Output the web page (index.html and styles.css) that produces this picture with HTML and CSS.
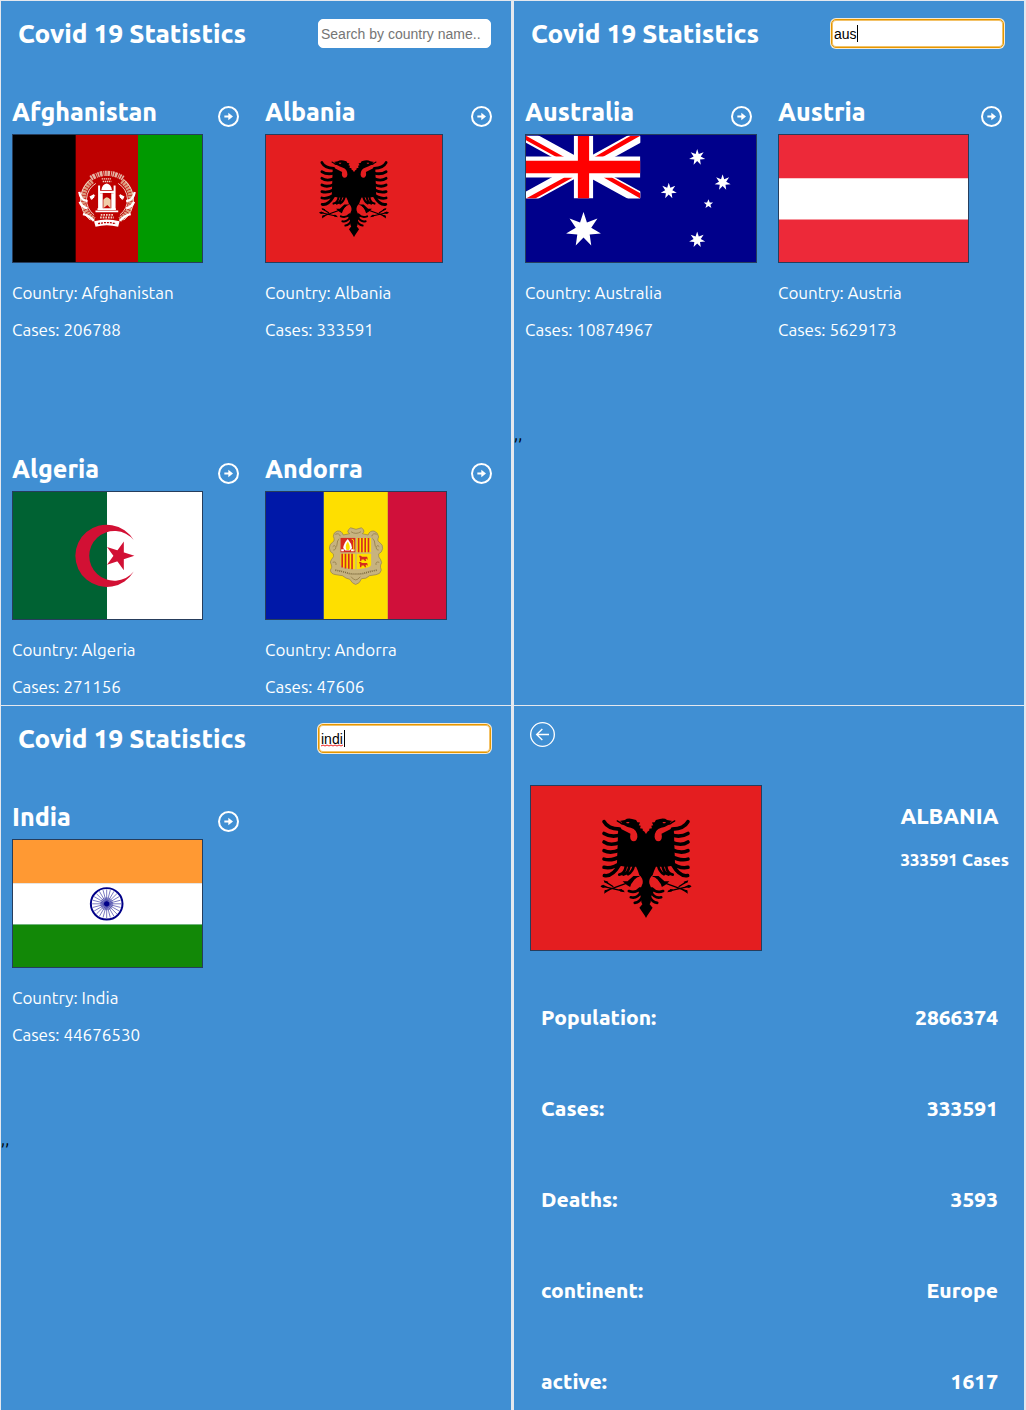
FILE: index.html
```html
<!DOCTYPE html>
<html lang="en">
<head>
<meta charset="utf-8">
<meta name="viewport" content="width=device-width, initial-scale=1">
<title>Covid 19 Statistics</title>
<link rel="stylesheet" href="styles.css">
</head>
<body>
<svg class="sprite" aria-hidden="true">
  <symbol id="go" viewBox="0 0 63 63">
    <circle cx="31.500" cy="31.500" r="28.500" fill="none" stroke="#fff" stroke-width="6"/>
    <path d="M19 31.500H38" stroke="#fff" stroke-width="6"/>
    <path d="M31 20L45 31.500L31 43Z" fill="#fff"/>
  </symbol>
  <symbol id="star7" viewBox="-1 -1 2 2">
    <path fill="#fff" d="M0-1L.193-.4 .782-.623 .433-.099 .975 .223 .347 .277 .434 .901 0 .444-.434 .901-.347 .277-.975 .223-.433-.099-.782-.623-.193-.4Z"/>
  </symbol>
  <symbol id="albania" viewBox="60 255 696 498" preserveAspectRatio="none">
    <path fill="#e41e20" d="M60 255h696v498H60z"/>
    <g id="half-eagle">
      <path d="M409 402L403 393 398 390 398 385 390 383 392 376 386 374 390 366 382 365 378 358 366 355Q352 352 344 358L328 361 336 365 330 370 342 374Q352 380 362 382 382 388 382 410 380 423 371 423 360 421 360 408L361 400 324 381 320 496 346 500 378 500Q384 512 388 526 400 536 398 550 394 566 384 574L392 590 394 608 397 614 388 625 408 654H409Z"/>
      <g fill="none" stroke="#000" stroke-width="11" stroke-linecap="round">
        <path d="M281 363Q292 384 328 386M281 399Q302 412 330 404M281 425Q300 438 330 426M281 451Q302 462 330 448M281 477Q304 484 332 468M281 502Q306 508 334 486M282 527Q306 532 328 494"/>
        <path stroke-width="8" d="M327 524Q344 522 347 498M340 524Q354 520 358 498M354 523Q368 514 371 498"/>
        <path stroke-width="8" d="M356 574Q376 582 390 566M362 593Q382 598 394 576M374 610Q390 608 398 588"/>
        <path stroke-width="4" d="M350 550L284 574M274 559L340 574M286 546L308 560M321 361L336 370"/>
      </g>
      <path d="M337 544L352 544 370 528 392 528Q366 538 360 562L350 556ZM270 560L278 555 290 560 278 565ZM280 541L294 546 292 551 282 548ZM281 582L284 571 300 570ZM326 569L334 568 344 578 330 575Z"/>
      <path fill="#e41e20" d="M348 364h10l-2 4h-6z"/>
      <path fill="#e41e20" d="M392 528Q364 536 366 563 376 560 386 550 392 540 392 528Z"/>
    </g>
    <use href="#half-eagle" transform="translate(816 0) scale(-1 1)"/>
  </symbol>
</svg>

<main class="board">
  <section class="panel">
    <header class="top">
      <h1 class="title">Covid 19 Statistics</h1>
      <div class="search"><input class="search-box" type="text" aria-label="Search by country name" placeholder="Search by country name.."></div>
    </header>
    <div class="cards">
      <article class="card">
        <div class="card-head"><h2 class="name">Afghanistan</h2><a class="go" href="#afghanistan" aria-label="Afghanistan details"><svg><use href="#go"/></svg></a></div>
        <svg class="flag flag-3x2" viewBox="36 400 573 388" preserveAspectRatio="none" role="img" aria-label="Flag of Afghanistan">
          <path d="M36 400h191v388H36z"/><path fill="#be0000" d="M226 400h189v388H226z"/><path fill="#090" d="M415 400h194v388H415z"/>
          <g fill="none" stroke="#f1d5c5">
            <path stroke-width="16" stroke-dasharray="7 2" stroke="#dd9c80" d="M276 540A72 72 0 0 0 282 658M366 540A72 72 0 0 1 360 658"/>
            <path stroke-width="3" d="M268 538A80 80 0 0 0 270 660M374 538A80 80 0 0 1 372 660M287 548A58 58 0 0 0 282 644M355 548A58 58 0 0 1 360 644"/>
            <path stroke-width="16" stroke-dasharray="5 2 8 3 3 2" stroke="#e5b5a5" d="M272 532Q320 502 370 532"/>
            <path stroke-width="4" stroke-dasharray="4 2" d="M305 534h30M308 542h26"/>
            <path stroke="#fff" stroke-width="7" d="M237 574Q240 600 262 602M405 574Q401 600 379 602M238 604Q244 620 262 624M403 604Q397 620 379 624M248 642Q262 644 282 662M393 642Q379 644 359 662"/>
            <path stroke="#fff" stroke-width="17" d="M284 672Q320 662 357 672"/>
            <path stroke="#be0000" stroke-width="4" stroke-dasharray="6 3" d="M294 671Q320 664 348 671"/>
            <path stroke="#fff" stroke-width="3" d="M284 584l-10 14M358 584l10 14"/>
            <path stroke-width="6" stroke-dasharray="5 3" d="M302 644h38M300 652h42"/>
          </g>
          <g fill="#fff"><path d="M304 568Q306 550 320 548 334 550 336 568ZM298 570h45v7h-45zM300 578h8v46h-8zM334 578h8v46h-8zM292 624h56v5h-56zM286 631h69v5h-69zM294 554h6v70h-6zM341 554h6v70h-6z"/><path d="M268 588l14-8v12l-10 4zM374 588l-14-8v12l10 4z"/></g>
          <path fill="#efcda8" d="M310 624v-26q10-16 22 0v26l-10-10z"/>
        </svg>
        <p class="fact">Country: Afghanistan</p><p class="fact">Cases: 206788</p>
      </article>
      <article class="card">
        <div class="card-head"><h2 class="name">Albania</h2><a class="go" href="#albania-details" aria-label="Albania details"><svg><use href="#go"/></svg></a></div>
        <svg class="flag flag-7x5" role="img" aria-label="Flag of Albania"><use href="#albania"/></svg>
        <p class="fact">Country: Albania</p><p class="fact">Cases: 333591</p>
      </article>
      <article class="card">
        <div class="card-head"><h2 class="name">Algeria</h2><a class="go" href="#algeria" aria-label="Algeria details"><svg><use href="#go"/></svg></a></div>
        <svg class="flag flag-3x2" viewBox="36 181 573 388" preserveAspectRatio="none" role="img" aria-label="Flag of Algeria">
          <path fill="#006233" d="M36 181h286v388H36z"/><path fill="#fff" d="M321 181h288v388H321z"/>
          <path fill="#d21034" d="M402 328A95 95 0 1 0 402 424A76 76 0 1 1 402 328ZM404 376L321 403 372 332 372 420 321 349Z"/>
        </svg>
        <p class="fact">Country: Algeria</p><p class="fact">Cases: 271156</p>
      </article>
      <article class="card">
        <div class="card-head"><h2 class="name">Andorra</h2><a class="go" href="#andorra" aria-label="Andorra details"><svg><use href="#go"/></svg></a></div>
        <svg class="flag flag-10x7" viewBox="25 180 548 390" preserveAspectRatio="none" role="img" aria-label="Flag of Andorra">
          <path fill="#0018a8" d="M25 180h176v390H25z"/><path fill="#fedf00" d="M201 180h195v390H201z"/><path fill="#d0103a" d="M396 180h177v390H396z"/>
          <path fill="#c7b37f" stroke="#8f7c4b" stroke-width="2" d="M276 296Q282 286 290 292 299 297 308 292 316 286 322 296 326 304 318 308L336 312Q340 298 354 300 366 304 368 318 362 330 370 334 382 342 380 354 378 366 368 370 366 380 374 388 380 398 374 404 372 410 376 420 374 432 360 434L340 437Q330 448 316 446 310 462 298 464 288 462 280 448 268 446 258 437L238 434Q222 432 221 420 228 410 224 404 218 394 224 388 234 378 230 370 218 364 218 352 218 340 228 334 236 330 230 316 230 304 242 300 256 298 260 312L280 308Q270 304 276 296Z"/>
          <path fill="none" stroke="#9b8652" stroke-width="3" d="M236 310q12-6 16 8-12 10-12 30M362 310q-12-6-16 8 12 10 12 30M228 348q8-8 10 4-6 10-8 6M370 348q-8-8-10 4 6 10 8 6M228 396q12-4 10 8M370 396q-12-4-10 8M284 302q14 10 30 0M284 440q14 20 28 0"/>
          <path fill="none" stroke="#7d6a3d" stroke-width="5" stroke-dasharray="3 3" d="M236 420Q260 424 276 430 298 434 322 430 340 424 362 420"/>
          <path fill="#c7b37f" d="M248 316h101v92q0 14-50 14t-51-14z"/>
          <path fill="#d52b1e" d="M252 321h45v44h-45z"/>
          <path fill="#fedf00" d="M301 321h44v44h-44zM252 370h45v47q-45-2-45-14zM301 370h44v33q0 12-44 14z"/>
          <path fill="none" stroke="#d52b1e" stroke-width="5" d="M307 321v44M317 321v44M327 321v44M337 321v44M257 370v42M267 370v45M277 370v46M287 370v47"/>
          <path fill="#fff" d="M274 324q12 14 13 28l-7 8h-14l-6-8q2-16 14-28zM254 356h8v6h-8zM284 356h10v6h-10z"/><path fill="#fedf00" d="M274 332q10 16 4 26h-8q-6-12 4-26z"/>
          <path fill="none" stroke="#fedf00" stroke-width="3" d="M292 360v-28q0-8-6-7"/>
          <path fill="#d52b1e" d="M308 376h6l3 3h16l2 8h-3v-3l-4 3 2 5h-4l-3-5h-7l-1 5h-4v-9zM308 395h6l3 3h16l2 8h-3v-3l-4 3 2 5h-4l-3-5h-7l-1 5h-4v-9z"/>
        </svg>
        <p class="fact">Country: Andorra</p><p class="fact">Cases: 47606</p>
      </article>
    </div>
  </section>

  <section class="panel">
    <header class="top">
      <h1 class="title">Covid 19 Statistics</h1>
      <div class="search"><input class="search-box is-active" type="text" aria-label="Search by country name" value="aus"><span class="caret"></span></div>
    </header>
    <div class="cards cards-short">
      <article class="card">
        <div class="card-head"><h2 class="name">Australia</h2><a class="go" href="#australia" aria-label="Australia details"><svg><use href="#go"/></svg></a></div>
        <svg class="flag flag-2x1" viewBox="45 400 696 388" preserveAspectRatio="none" role="img" aria-label="Flag of Australia">
          <path fill="#00008b" d="M45 400h696v388H45z"/>
          <svg x="45" y="402" width="346" height="192" viewBox="0 0 346 192">
            <path stroke="#fff" stroke-width="38" d="M0 0L346 192M346 0L0 192"/>
            <path fill="#f00" d="M0 0L0 14 93 66H117ZM346 0H317L206 66H231ZM0 192H28L142 128H116ZM346 192V176L260 128H235Z"/>
            <path stroke="#fff" stroke-width="64" d="M0 96H346"/><path stroke="#fff" stroke-width="58" d="M174 0V192"/>
            <path stroke="#f00" stroke-width="38" d="M0 96H346"/><path stroke="#f00" stroke-width="34" d="M174 0V192"/>
          </svg>
          <use href="#star7" x="165" y="635" width="108" height="108"/>
          <use href="#star7" x="538" y="443" width="50" height="50"/>
          <use href="#star7" x="615" y="520" width="50" height="50"/>
          <use href="#star7" x="452" y="546" width="50" height="50"/>
          <use href="#star7" x="538" y="695" width="50" height="50"/>
          <path fill="#fff" d="M597 596L601 606 611 606 603 613 606 623 597 617 588 623 591 613 583 606 593 606Z"/>
        </svg>
        <p class="fact">Country: Australia</p><p class="fact">Cases: 10874967</p>
      </article>
      <article class="card">
        <div class="card-head"><h2 class="name">Austria</h2><a class="go" href="#austria" aria-label="Austria details"><svg><use href="#go"/></svg></a></div>
        <svg class="flag flag-3x2" viewBox="0 0 573 388" preserveAspectRatio="none" role="img" aria-label="Flag of Austria">
          <path fill="#ed2939" d="M0 0h573v388H0z"/><path fill="#fff" d="M0 132h573v126H0z"/>
        </svg>
        <p class="fact">Country: Austria</p><p class="fact">Cases: 5629173</p>
      </article>
    </div>
    <p class="stray">,,</p>
  </section>

  <section class="panel">
    <header class="top">
      <h1 class="title">Covid 19 Statistics</h1>
      <div class="search"><input class="search-box is-active" type="text" aria-label="Search by country name" value="indi"><span class="caret"></span>
        <svg class="squiggle" viewBox="0 0 22 3" aria-hidden="true"><path fill="none" stroke="#e22" d="M0 2L2 1 4 2 6 1 8 2 10 1 12 2 14 1 16 2 18 1 20 2 22 1"/></svg></div>
    </header>
    <div class="cards">
      <article class="card">
        <div class="card-head"><h2 class="name">India</h2><a class="go" href="#india" aria-label="India details"><svg><use href="#go"/></svg></a></div>
        <svg class="flag flag-3x2" viewBox="36 145 573 388" preserveAspectRatio="none" role="img" aria-label="Flag of India">
          <path fill="#f93" d="M36 145h573v133H36z"/><path fill="#fff" d="M36 277h573v127H36z"/><path fill="#128807" d="M36 403h573v130H36z"/>
          <g transform="translate(320 340)" fill="none" stroke="#000088">
            <circle r="48" stroke-width="6"/><circle r="6" fill="#000088" stroke-width="4"/>
            <circle r="14" stroke-width="12" opacity=".3"/>
            <path stroke-width="1.600" d="M-44 0H44M-42-11L42 11M-38-22L38 22M-31-31L31 31M-22-38L22 38M-11-42L11 42M0-44V44M11-42L-11 42M22-38L-22 38M31-31L-31 31M38-22L-38 22M42-11L-42 11"/>
          </g>
        </svg>
        <p class="fact">Country: India</p><p class="fact">Cases: 44676530</p>
      </article>
    </div>
    <p class="stray">,,</p>
  </section>

  <section class="panel detail" id="albania-details">
    <a class="back" href="#" aria-label="Back"><svg viewBox="0 0 75 75" fill="none" stroke="#fff" stroke-width="4"><circle cx="37.500" cy="37.500" r="35.500"/><path d="M57 37.500H20M37 21L20 37.500 37 54"/></svg></a>
    <div class="hero">
      <svg class="flag-large" role="img" aria-label="Flag of Albania"><use href="#albania"/></svg>
      <div class="hero-text"><h1 class="hero-name">ALBANIA</h1><p class="hero-cases">333591 Cases</p></div>
    </div>
    <dl class="stats">
      <div class="stat"><dt>Population:</dt><dd>2866374</dd></div>
      <div class="stat"><dt>Cases:</dt><dd>333591</dd></div>
      <div class="stat"><dt>Deaths:</dt><dd>3593</dd></div>
      <div class="stat"><dt>continent:</dt><dd>Europe</dd></div>
      <div class="stat"><dt>active:</dt><dd>1617</dd></div>
    </dl>
  </section>
</main>
</body>
</html>
```
FILE: styles.css
```css
* { box-sizing: border-box; margin: 0; padding: 0; }

body {
  background: #e4e8ee;
  color: #fff;
  font: 17px/18px Ubuntu, "Noto Sans", sans-serif;
}

.sprite { position: absolute; width: 0; height: 0; }

.board {
  display: grid;
  grid-template-columns: 1fr 1fr;
  grid-auto-rows: 1fr;
  gap: 1px 3px;
  min-height: 100vh;
  padding: 1px 2px 0 1px;
}

.panel { background: #408fd3; min-width: 0; }

.top {
  display: flex;
  align-items: center;
  justify-content: space-between;
  padding: 18px 20px 0 17px;
}

.title { font-size: 26px; font-weight: 800; line-height: 29px; white-space: nowrap; }

.search { position: relative; display: flex; }

.search-box {
  width: 173px;
  height: 29px;
  padding: 0 2px;
  border: 1px solid #fff;
  border-radius: 5px;
  background: #fff;
  color: #000;
  font: 14px "Liberation Sans", Arial, sans-serif;
  outline: none;
}
.search-box::placeholder { color: #757575; opacity: 1; }
.search-box.is-active {
  border-color: #e59700;
  box-shadow: 0 0 0 1px #f4ead6, inset 0 0 0 1px #f3c268;
}

.caret { position: absolute; left: 26px; top: 6px; width: 1px; height: 17px; background: #000; }
.squiggle { position: absolute; left: 3px; top: 20px; width: 22px; height: 3px; }

.cards {
  display: grid;
  grid-template-columns: 1fr 1fr;
  gap: 114px 26px;
  padding: 48px 19px 8px 11px;
}
.cards-short { grid-template-columns: 227fr 224fr; padding-right: 22px; }

.card { min-width: 0; }
.card-head { display: flex; justify-content: space-between; height: 38px; }
.name { font-size: 25px; font-weight: 800; line-height: 32px; white-space: nowrap; }
.go { width: 21px; height: 21px; margin-top: 10px; }
.go svg { display: block; width: 100%; height: 100%; }

.flag, .flag-large { display: block; border: 1px solid #263d5c; }
.flag { height: 129px; margin-bottom: 21px; }
.flag-3x2 { width: 191px; }
.flag-7x5 { width: 178px; }
.flag-10x7 { width: 182px; }
.flag-2x1 { width: 232px; }

.fact + .fact { margin-top: 19px; }

.stray { margin-top: 78px; color: #000; }

.detail { padding: 16px 15px 14px 16px; }
.back { display: block; width: 25px; height: 25px; }
.back svg { display: block; }

.hero { display: flex; justify-content: space-between; margin-top: 38px; }
.flag-large { width: 232px; height: 166px; }
.hero-text { padding-top: 17px; }
.hero-name { font-size: 22px; font-weight: 800; line-height: 28px; }
.hero-cases { margin-top: 20px; font-weight: 800; line-height: 20px; }

.stats { display: grid; gap: 63px; padding: 52px 11px 0; font-size: 21px; font-weight: 800; line-height: 28px; }
.stat { display: flex; justify-content: space-between; }
```
